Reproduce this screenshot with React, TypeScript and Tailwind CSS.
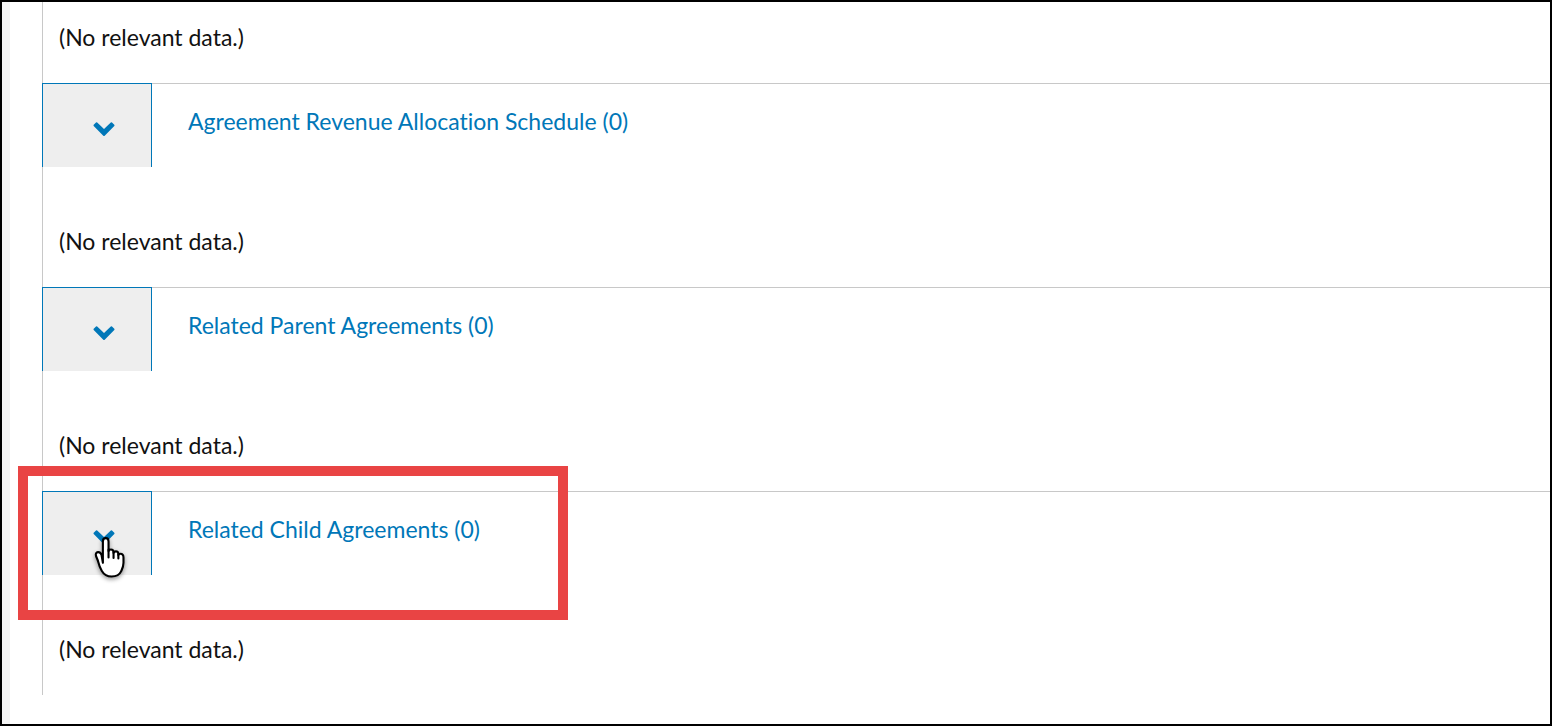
import React, { useState } from 'react';

interface SectionProps {
  id: string;
  title: string;
  highlighted?: boolean;
}

const sections: SectionProps[] = [
  { id: 'revenue-allocation', title: 'Agreement Revenue Allocation Schedule (0)' },
  { id: 'related-parents', title: 'Related Parent Agreements (0)' },
  { id: 'related-children', title: 'Related Child Agreements (0)', highlighted: true },
];

function ChevronIcon() {
  return (
    <svg className="h-[15px] w-[22px]" viewBox="0 0 22 15" aria-hidden="true">
      <path
        d="M4.200.6 11 6.900 17.800.6q.6-.5 1.200 0l2.300 2.200q.5.6 0 1.200L11.700 13.700q-.7.6-1.400 0L.7 4q-.5-.6 0-1.200L3 .6q.6-.5 1.200 0z"
        fill="currentColor"
      />
    </svg>
  );
}

function HandPointer() {
  return (
    <svg
      className="pointer-events-none absolute left-[48px] top-[43px] h-[46px] w-[38px] drop-shadow-[0_2px_2px_rgba(0,0,0,0.4)]"
      viewBox="0 0 36 44"
      aria-hidden="true"
    >
      <path
        d="M11.200 26.500V6.200C11.200 4.200 12.400 3 13.900 3s2.700 1.200 2.700 3.200v9.200c.4-1 1.300-1.600 2.300-1.600 1.500 0 2.500 1 2.500 2.500v.8c.4-.9 1.200-1.400 2.200-1.400 1.400 0 2.400 1 2.400 2.400v1c.4-.7 1.100-1.100 1.900-1.100 1.900 0 3 1.400 3 3.600v5c0 3.800-1.200 5.800-2.300 8.200-1.400 3.100-4.400 4.900-9.100 4.900-4.200 0-7.200-1.700-9.300-5.300-1.700-2.900-2.700-5.600-3.500-8.900-.6-2.300-1.700-4.100-2.100-5.500-.6-2 .3-3.400 1.900-3.600 1.800-.2 2.700 1 3.400 2.700z"
        fill="#fff"
        stroke="#000"
        strokeWidth="2"
        strokeLinejoin="round"
      />
      <path d="M16.600 14v7.500M21.400 16v6M26 18.500v4" stroke="#000" strokeWidth="2" strokeLinecap="round" />
    </svg>
  );
}

function EmptyMessage() {
  return <p className="px-4 pb-8 text-[#111]">(No relevant data.)</p>;
}

function Section({ id, title, highlighted }: SectionProps) {
  const [open, setOpen] = useState(true);

  return (
    <section className="relative border-t border-[#c8c8c8]">
      <header className="-mt-px flex items-start text-[#0077b8]">
        <button
          type="button"
          aria-label={title}
          aria-expanded={open}
          aria-controls={id}
          onClick={() => setOpen(!open)}
          className="-ml-px flex h-[84px] w-[110px] shrink-0 cursor-pointer items-center justify-center border-x border-t border-[#0077b8] bg-[#eee] pl-[14px] pt-2"
        >
          <ChevronIcon />
        </button>
        <a href={`#${id}`} className="ml-9 mt-6">
          {title}
        </a>
      </header>
      <div id={id} className="pt-[60px]">
        {open && <EmptyMessage />}
      </div>
      {highlighted && (
        <>
          <div className="pointer-events-none absolute -left-[25px] -top-[26px] h-[154px] w-[550px] border-[10px] border-[#e94444]" />
          <HandPointer />
        </>
      )}
    </section>
  );
}

export default function App() {
  return (
    <main className="flex min-h-screen border-2 border-black bg-[#f5f5f5] pl-2 font-[Lato,sans-serif] text-[23px] leading-7 [font-variant-ligatures:none]">
      <div className="grow bg-white pl-8">
        <div className="border-l border-[#c8c8c8]">
          <div className="pt-[21px]">
            <EmptyMessage />
          </div>
          {sections.map((section) => (
            <Section key={section.id} {...section} />
          ))}
        </div>
      </div>
    </main>
  );
}
